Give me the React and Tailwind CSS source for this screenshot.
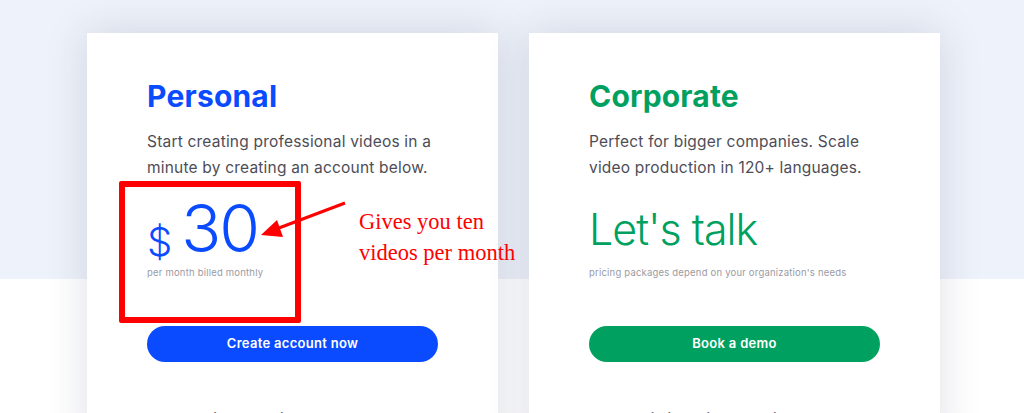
import React from 'react';

const font = { fontFamily: 'Inter, "Noto Sans", sans-serif' };

const PlanCard = ({ title, titleColor, description, price, note, button, buttonColor, feature }) => (
  <div className="w-[411px] h-[420px] shrink-0 bg-white shadow-[0_0_40px_rgba(40,50,80,0.15)] px-[60px] pt-[43px]">
    <h2 className={`text-[30px] leading-[40px] font-bold tracking-[0.2px] ${titleColor}`}>{title}</h2>
    <p className="mt-[13px] text-[15.5px] leading-[26px] text-[#4d4d57] tracking-[0.2px]">{description}</p>
    <div className="h-[145px] pt-[12px]">
      <div className="h-[70px]">{price}</div>
      <p className="mt-[4px] text-[9.5px] leading-[12px] text-[#9a9aa3] tracking-[0.2px]">{note}</p>
    </div>
    <button className={`w-full h-[36px] rounded-full text-white text-[13px] font-semibold tracking-[0.3px] ${buttonColor}`}>
      {button}
    </button>
    <p className="mt-[47px] pl-[38px] text-[15px] leading-[20px] text-[#6b6b75]">{feature}</p>
  </div>
);

export default function App() {
  return (
    <div
      style={font}
      className="relative w-full h-[413px] overflow-hidden bg-[linear-gradient(to_bottom,#eef2fa_279px,#ffffff_279px)]"
    >
      <div className="flex gap-[31px] pl-[87px] pt-[33px]">
        <PlanCard
          title="Personal"
          titleColor="text-[#0a4bff]"
          description="Start creating professional videos in a minute by creating an account below."
          price={
            <div className="flex items-baseline text-[#0a4bff]">
              <span className="text-[40px] font-light leading-none translate-y-[4px]">$</span>
              <span className="ml-[9px] text-[66px] font-light leading-[70px] tracking-[-2px]">30</span>
            </div>
          }
          note="per month billed monthly"
          button="Create account now"
          buttonColor="bg-[#0a4bff]"
          feature="10 video credits per month"
        />
        <PlanCard
          title="Corporate"
          titleColor="text-[#00a160]"
          description="Perfect for bigger companies. Scale video production in 120+ languages."
          price={
            <div className="pt-[14px] text-[#00a160]">
              <span className="block text-[43px] font-light leading-[44px] tracking-[-1px]">Let's talk</span>
            </div>
          }
          note="pricing packages depend on your organization's needs"
          button="Book a demo"
          buttonColor="bg-[#00a160]"
          feature="Unlimited video credits"
        />
      </div>

      {/* annotation overlay */}
      <div className="absolute left-[119px] top-[181px] w-[182px] h-[142px] border-[6px] border-[#ff0000] rounded-[2px]" />
      <svg className="absolute left-[255px] top-[195px]" width="100" height="50" viewBox="0 0 100 50">
        <line x1="90" y1="8" x2="16" y2="36" stroke="#ff0000" strokeWidth="3" />
        <polygon points="6,40 22,25 28,42" fill="#ff0000" />
      </svg>
      <div
        className="absolute left-[359px] top-[206px] text-[#ff0000] text-[22.5px] leading-[31px]"
        style={{ fontFamily: '"Liberation Serif", serif' }}
      >
        Gives you ten
        <br />
        videos per month
      </div>
    </div>
  );
}
